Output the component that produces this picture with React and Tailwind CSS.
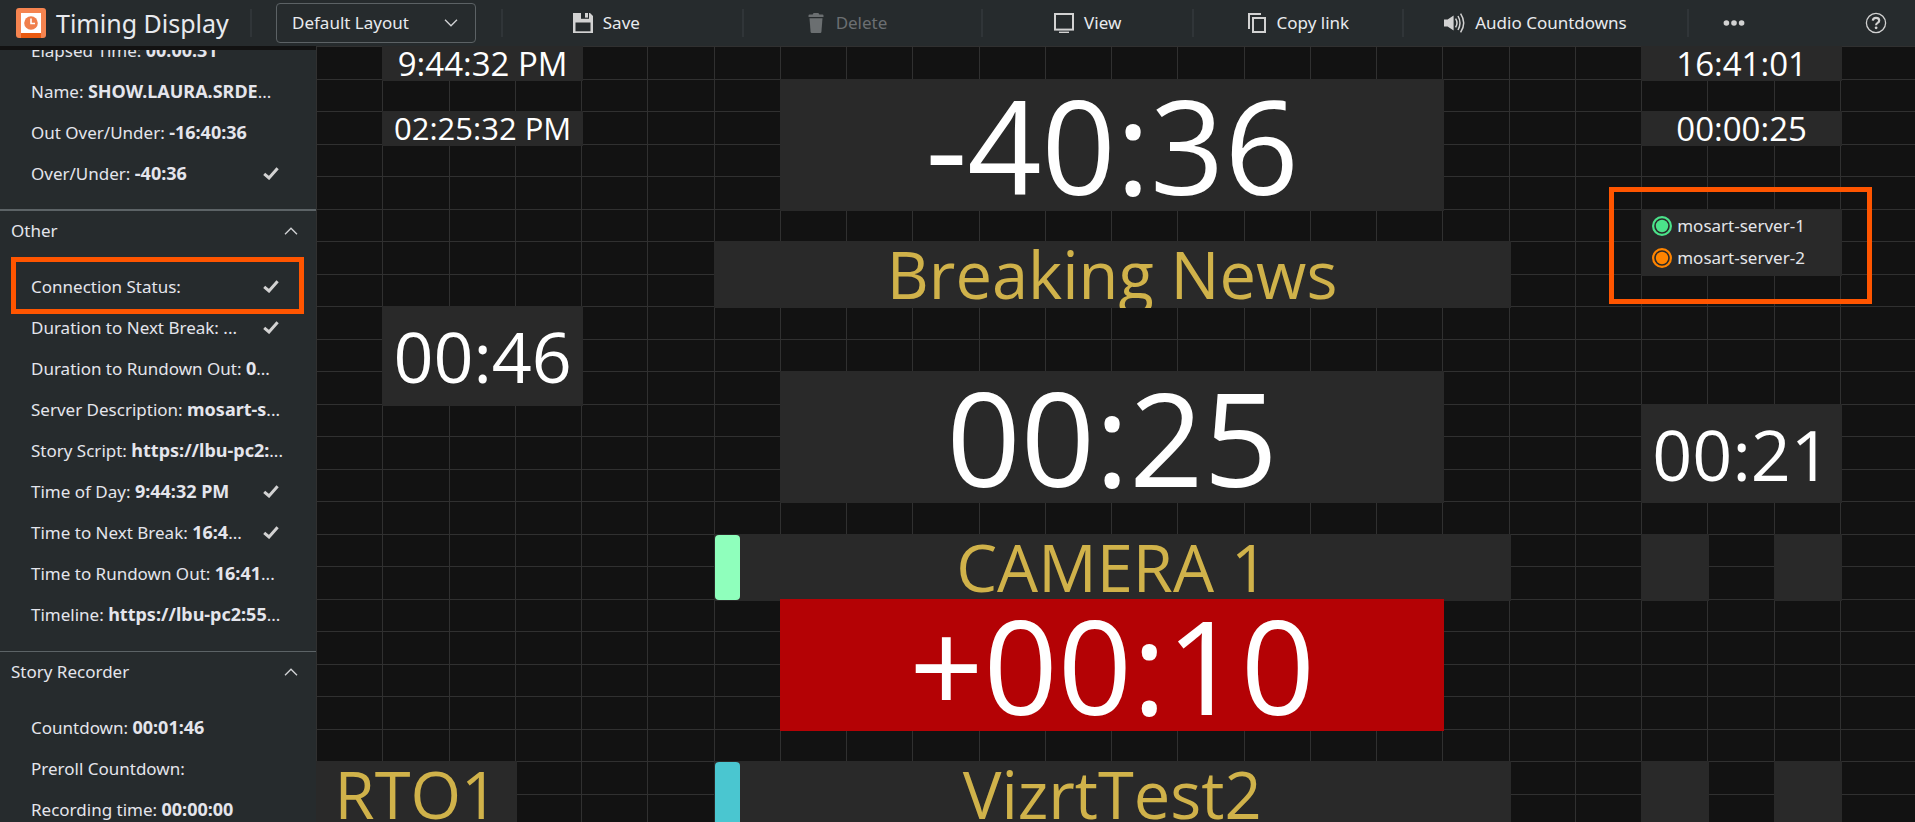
import React, { useState } from 'react';

const sections = [
  {
    title: null,
    items: [
      { label: 'Elapsed Time:', value: '00:00:31' },
      { label: 'Name:', value: 'SHOW.LAURA.SRDE', cut: true },
      { label: 'Out Over/Under:', value: '-16:40:36' },
      { label: 'Over/Under:', value: '-40:36', checked: true },
    ],
  },
  {
    title: 'Other',
    items: [
      { label: 'Connection Status:', value: '', checked: true, highlight: true },
      { label: 'Duration to Next Break:', value: '', cut: true, checked: true },
      { label: 'Duration to Rundown Out:', value: '0', cut: true },
      { label: 'Server Description:', value: 'mosart-s', cut: true },
      { label: 'Story Script:', value: 'https://lbu-pc2:', cut: true },
      { label: 'Time of Day:', value: '9:44:32 PM', checked: true },
      { label: 'Time to Next Break:', value: '16:4', cut: true, checked: true },
      { label: 'Time to Rundown Out:', value: '16:41', cut: true },
      { label: 'Timeline:', value: 'https://lbu-pc2:55', cut: true },
    ],
  },
  {
    title: 'Story Recorder',
    items: [
      { label: 'Countdown:', value: '00:01:46' },
      { label: 'Preroll Countdown:', value: '' },
      { label: 'Recording time:', value: '00:00:00' },
    ],
  },
];

const tiles = [
  { text: '9:44:32 PM', area: 'col-start-2 col-span-3 row-start-1 row-span-1', style: 'text-[33px] text-white' },
  { text: '02:25:32 PM', area: 'col-start-2 col-span-3 row-start-3 row-span-1', style: 'text-[31px] text-white' },
  { text: '-40:36', area: 'col-start-8 col-span-10 row-start-2 row-span-4', style: 'text-[130px] text-white' },
  { text: 'Breaking News', area: 'col-start-7 col-span-12 row-start-7 row-span-2', style: 'text-[65px] text-[#d0b24a]' },
  { text: '00:46', area: 'col-start-2 col-span-3 row-start-9 row-span-3', style: 'text-[70px] text-white' },
  { text: '00:25', area: 'col-start-8 col-span-10 row-start-11 row-span-4', style: 'text-[130px] text-white' },
  { text: 'CAMERA 1', area: 'col-start-7 col-span-12 row-start-16 row-span-2', style: 'text-[65px] text-[#d0b24a]', marker: 'bg-[#8fffbc]' },
  { text: '+00:10', area: 'col-start-8 col-span-10 row-start-18 row-span-4', style: 'text-[130px] text-white', alert: true },
  { text: 'RTO1', area: 'col-start-1 col-span-3 row-start-23 row-span-2', style: 'text-[65px] text-[#d0b24a]' },
  { text: 'VizrtTest2', area: 'col-start-7 col-span-12 row-start-23 row-span-2', style: 'text-[65px] text-[#d0b24a]', marker: 'bg-[#4ac6d0]' },
  { text: '16:41:01', area: 'col-start-21 col-span-3 row-start-1 row-span-1', style: 'text-[33px] text-white' },
  { text: '00:00:25', area: 'col-start-21 col-span-3 row-start-3 row-span-1', style: 'text-[33px] text-white' },
  { text: '00:21', area: 'col-start-21 col-span-3 row-start-12 row-span-3', style: 'text-[70px] text-white' },
  { text: '', area: 'col-start-21 col-span-1 row-start-16 row-span-2', style: '' },
  { text: '', area: 'col-start-23 col-span-1 row-start-16 row-span-2', style: '' },
  { text: '', area: 'col-start-21 col-span-1 row-start-23 row-span-2', style: '' },
  { text: '', area: 'col-start-23 col-span-1 row-start-23 row-span-2', style: '' },
];

const servers = [
  { name: 'mosart-server-1', color: 'text-[#4be38a]' },
  { name: 'mosart-server-2', color: 'text-[#ff8400]' },
];

const LINES = Array.from({ length: 24 }, (_, i) => i);
const COLS = 'grid-cols-[repeat(23,minmax(0,1fr))_75px]';
const ROWS = 'grid-rows-[repeat(12,33px_32px)]';

const Logo = () => (
  <svg className="size-[30px] shrink-0" viewBox="0 0 30 30">
    <rect width="30" height="30" rx="3" fill="#f58450" />
    <rect x="5" y="5" width="20" height="20" fill="#fff" />
    <rect x="5" y="25" width="20" height="5" fill="#ea5a10" />
    <circle cx="15" cy="15" r="6.8" fill="#f07f4c" />
    <path d="M15 10.5V15.5H19" fill="none" stroke="#fff" strokeWidth="1.6" />
  </svg>
);

const SaveIcon = () => (
  <svg className="size-5" viewBox="0 0 20 20">
    <path d="M0 0H17L20 3V20H0Z" fill="#d2d2d2" />
    <path d="M8 0H16V5.8H8Z" fill="#262b2d" />
    <path d="M12 0H15V4.6H12Z" fill="#d2d2d2" />
    <path d="M2.5 9.5H17.5V18.3H2.5Z" fill="#262b2d" />
  </svg>
);

const TrashIcon = () => (
  <svg className="size-5" viewBox="-2.5 0 20 20" fill="#6b6f71">
    <path d="M0 4V2.4Q0 1.4 1.2 1.4H4.2Q4.6 0 5.8 0H9.2Q10.4 0 10.8 1.4H13.8Q15 1.4 15 2.4V4Z" />
    <path d="M1 5.2H14L12.9 19Q12.8 20 11.8 20H3.2Q2.2 20 2.1 19Z" />
  </svg>
);

const ViewIcon = () => (
  <svg className="size-5" viewBox="0 0 20 20">
    <rect x="1" y="1" width="18" height="15.6" fill="none" stroke="#d2d2d2" strokeWidth="2" />
    <path d="M5 19.3H15" stroke="#d2d2d2" strokeWidth="1.4" />
  </svg>
);

const CopyIcon = () => (
  <svg className="size-5" viewBox="-1 0 20 20" fill="none" stroke="#d2d2d2" strokeWidth="2">
    <path d="M1 16V1H13" />
    <rect x="5" y="5" width="12" height="14" />
  </svg>
);

const SpeakerIcon = () => (
  <svg className="h-5 w-[21px]" viewBox="0 0 21 20">
    <path d="M0 6.6H3.6L9.6 2.4V17.6L3.6 13.4H0Z" fill="#d2d2d2" />
    <path
      d="M11.6 5.6Q14.4 10 11.6 14.4M14 3Q18 10 14 17M16.6 .6Q22.8 10 16.6 19.4"
      fill="none"
      stroke="#d2d2d2"
      strokeWidth="1.5"
    />
  </svg>
);

const DotsIcon = () => (
  <svg className="h-5 w-[22px]" viewBox="0 0 22 20" fill="#d2d2d2">
    <circle cx="3.4" cy="10" r="2.8" />
    <circle cx="11" cy="10" r="2.8" />
    <circle cx="18.6" cy="10" r="2.8" />
  </svg>
);

const HelpIcon = () => (
  <svg className="size-[22px]" viewBox="0 0 22 22" fill="none" stroke="#d2d2d2">
    <circle cx="11" cy="11" r="9.6" strokeWidth="1.3" />
    <path d="M7.8 8.6Q8 5.8 11 5.8Q14.2 5.8 14.2 8.4Q14.2 10 12.6 10.9Q11.1 11.7 11.1 13.2" strokeWidth="2.2" />
    <circle cx="11.1" cy="15.8" r="1.4" fill="#d2d2d2" stroke="none" />
  </svg>
);

const Chevron = ({ className, up }) => (
  <svg className={className} viewBox="0 0 14 8" fill="none" stroke="#d2d4d6" strokeWidth="1.3">
    <path d={up ? 'M1 7.2L7 1.2L13 7.2' : 'M1 .8L7 6.8L13 .8'} />
  </svg>
);

const Check = () => (
  <svg className="h-[13px] w-4 shrink-0" viewBox="0 0 16 13" fill="none" stroke="#d2d2d2" strokeWidth="3">
    <path d="M1.2 6.8L6 11L14.6 1.2" />
  </svg>
);

const ToolButton = ({ icon, label, className = '', disabled }) => (
  <div className={`flex items-center justify-center border-r-2 border-[#303538] ${className}`}>
    <button
      type="button"
      disabled={disabled}
      className={`flex items-center gap-[10px] whitespace-nowrap ${disabled ? 'text-[#6b6f72]' : ''}`}
    >
      {icon}
      {label}
    </button>
  </div>
);

const Header = () => {
  const [layout, setLayout] = useState('Default Layout');

  return (
    <header className="flex h-[46px] shrink-0 items-center bg-[#262b2d] text-[#e8eaee]">
      <div className="flex h-7 w-[252px] shrink-0 items-center gap-[10px] border-r-2 border-[#303538] pl-4">
        <Logo />
        <h1 className="text-[25px] leading-7 whitespace-nowrap">Timing Display</h1>
      </div>
      <div className="flex h-7 w-[251px] shrink-0 items-center border-r-2 border-[#303538] pl-6">
        <div className="relative w-[200px]">
          <select
            aria-label="Layout"
            value={layout}
            onChange={(e) => setLayout(e.target.value)}
            className="h-10 w-full appearance-none rounded-sm border border-[#5c6265] bg-[#262b2d] pl-[15px]"
          >
            <option>Default Layout</option>
          </select>
          <Chevron className="pointer-events-none absolute top-4 right-[18px] h-2 w-[14px]" />
        </div>
      </div>
      <nav className="grid h-7 flex-1 grid-cols-[241fr_240fr_211fr_210fr_286fr_226fr]">
        <ToolButton icon={<SaveIcon />} label="Save" className="pr-8" />
        <ToolButton icon={<TrashIcon />} label="Delete" className="pr-8" disabled />
        <ToolButton icon={<ViewIcon />} label="View" />
        <ToolButton icon={<CopyIcon />} label="Copy link" />
        <ToolButton icon={<SpeakerIcon />} label="Audio Countdowns" className="pr-5" />
        <div className="flex items-center justify-between pr-7 pl-[34px]">
          <button type="button" aria-label="More">
            <DotsIcon />
          </button>
          <button type="button" aria-label="Help">
            <HelpIcon />
          </button>
        </div>
      </nav>
    </header>
  );
};

const Item = ({ item }) => (
  <li className="relative flex h-[41px] items-center justify-between pr-[37px] pl-[31px] whitespace-nowrap">
    <span>
      {item.label} <b className="text-lg leading-none font-bold">{item.value}</b>
      {item.cut && '...'}
    </span>
    {item.checked && <Check />}
    {item.highlight && (
      <span className="absolute -top-[9px] right-3 -bottom-[7px] left-[11px] border-5 border-[#ff5500]" />
    )}
  </li>
);

const Sidebar = () => (
  <aside className="mt-1 w-[316px] shrink-0 overflow-hidden bg-[#262b2d] text-[#e4e5ec]">
    {sections.map((section, i) =>
      section.title ? (
        <section key={i} className="border-t border-[#5c6366] first-of-type:border-t-2">
          <button type="button" className="flex h-10 w-full items-center justify-between pr-[18px] pl-[11px]">
            {section.title}
            <Chevron up className="h-2 w-[14px]" />
          </button>
          <ul className="pt-[15px] pb-4">
            {section.items.map((item) => (
              <Item key={item.label} item={item} />
            ))}
          </ul>
        </section>
      ) : (
        <ul key={i} className="-mt-5 pb-[15px]">
          {section.items.map((item) => (
            <Item key={item.label} item={item} />
          ))}
        </ul>
      )
    )}
  </aside>
);

const Tile = ({ tile }) => (
  <div
    className={`relative -mr-[2px] -mb-[2px] flex items-center justify-center overflow-hidden ${tile.area} ${
      tile.alert ? 'bg-[#b40205]' : 'bg-[#292929]'
    }`}
  >
    {tile.marker && <span className={`absolute inset-y-px left-px w-[25px] rounded-sm ${tile.marker}`} />}
    <span className={`leading-none whitespace-nowrap ${tile.style}`}>{tile.text}</span>
  </div>
);

const ServerStatus = () => (
  <div className="relative col-span-3 col-start-21 row-span-2 row-start-6 -mr-[2px] -mb-[2px] bg-[#292929] pt-[1px] pl-[11px] text-[#e4e5ea]">
    <ul className="font-['Noto_Sans',sans-serif]">
      {servers.map((server) => (
        <li key={server.name} className="flex h-8 items-center gap-[5px]">
          <svg className={`size-5 ${server.color}`} viewBox="0 0 20 20">
            <circle cx="10" cy="10" r="8.9" fill="none" stroke="currentColor" strokeWidth="2.2" />
            <circle cx="10" cy="10" r="6.2" fill="currentColor" />
          </svg>
          {server.name}
        </li>
      ))}
    </ul>
    <span className="absolute -top-[22px] -right-[30px] -bottom-[28px] -left-8 border-5 border-[#ff5500]" />
  </div>
);

const Canvas = () => (
  <main className="grid flex-1 content-start overflow-hidden bg-[#121212] font-['Open_Sans',sans-serif]">
    {/* grid lines */}
    <div className={`grid [grid-area:1/1] ${COLS}`}>
      {LINES.map((n) => (
        <div key={n} className="border-l border-[#303030]" />
      ))}
    </div>
    <div className={`grid [grid-area:1/1] ${ROWS}`}>
      {LINES.map((n) => (
        <div key={n} className="border-t border-[#303030]" />
      ))}
    </div>

    <div className={`grid [grid-area:1/1] ${COLS} ${ROWS}`}>
      {tiles.map((tile, i) => (
        <Tile key={i} tile={tile} />
      ))}
      <ServerStatus />
    </div>
  </main>
);

const App = () => (
  <div className="flex h-screen flex-col overflow-hidden bg-[#121212] font-['Noto_Sans',sans-serif] text-[17px]">
    <Header />
    <div className="flex min-h-0 flex-1">
      <Sidebar />
      <Canvas />
    </div>
  </div>
);

export default App;
